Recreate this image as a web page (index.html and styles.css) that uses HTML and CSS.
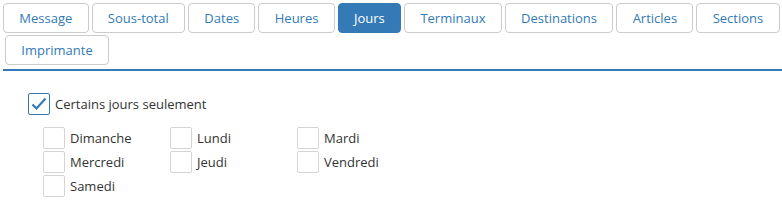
FILE: index.html
```html
<!DOCTYPE html>
<html lang="fr">
<head>
  <meta charset="UTF-8" />
  <title>Jours</title>
  <link rel="stylesheet" href="styles.css">
</head>
<body>

  <div class="tabs">
    <div class="tab">Message</div>
    <div class="tab">Sous-total</div>
    <div class="tab">Dates</div>
    <div class="tab">Heures</div>
    <div class="tab active">Jours</div>
    <div class="tab">Terminaux</div>
    <div class="tab">Destinations</div>
    <div class="tab">Articles</div>
    <div class="tab">Sections</div>
    <div class="tab second-row">Imprimante</div>
  </div>

  <div class="panel">
    <label class="check main">
      <span class="box checked">
        <svg width="16" height="14" viewBox="0 0 16 14"><path d="M1.5 7.5 L5.5 11.5 L14.5 1.5" fill="none" stroke="#337ab7" stroke-width="2.2"/></svg>
      </span>
      Certains jours seulement
    </label>

    <div class="days">
      <label class="check"><span class="box"></span>Dimanche</label>
      <label class="check"><span class="box"></span>Lundi</label>
      <label class="check"><span class="box"></span>Mardi</label>
      <label class="check"><span class="box"></span>Mercredi</label>
      <label class="check"><span class="box"></span>Jeudi</label>
      <label class="check"><span class="box"></span>Vendredi</label>
      <label class="check"><span class="box"></span>Samedi</label>
    </div>
  </div>

</body>
</html>
```

FILE: styles.css
```css
body {
  margin: 0;
  background: #fff;
  font-family: "Open Sans", "Noto Sans", sans-serif;
  font-size: 13px;
  color: #333;
}
.tabs {
  display: flex;
  flex-wrap: wrap;
  column-gap: 3px;
  row-gap: 2px;
  margin-left: 3px;
  padding-top: 3px;
  padding-bottom: 4px;
  border-bottom: 2px solid #337ab7;
}
.tab {
  height: 28px;
  line-height: 28px;
  padding: 0 15.3px;
  border: 1px solid #ccc;
  border-radius: 4px;
  color: #337ab7;
  cursor: pointer;
}
.tab.active {
  background: #337ab7;
  border-color: #337ab7;
  color: #fff;
}
.tab.second-row {
  margin-left: 2px;
}
.panel {
  padding: 22px 0 0 28px;
}
.check {
  display: flex;
  align-items: center;
  gap: 5px;
  height: 22px;
}
.box {
  box-sizing: border-box;
  width: 22px;
  height: 22px;
  border: 1px solid #d4d4d4;
  border-radius: 2px;
  display: flex;
  align-items: center;
  justify-content: center;
}
.box.checked {
  border-color: #337ab7;
}
.days {
  display: grid;
  grid-template-columns: repeat(3, 127px);
  row-gap: 2px;
  margin: 12px 0 0 15px;
}
```
